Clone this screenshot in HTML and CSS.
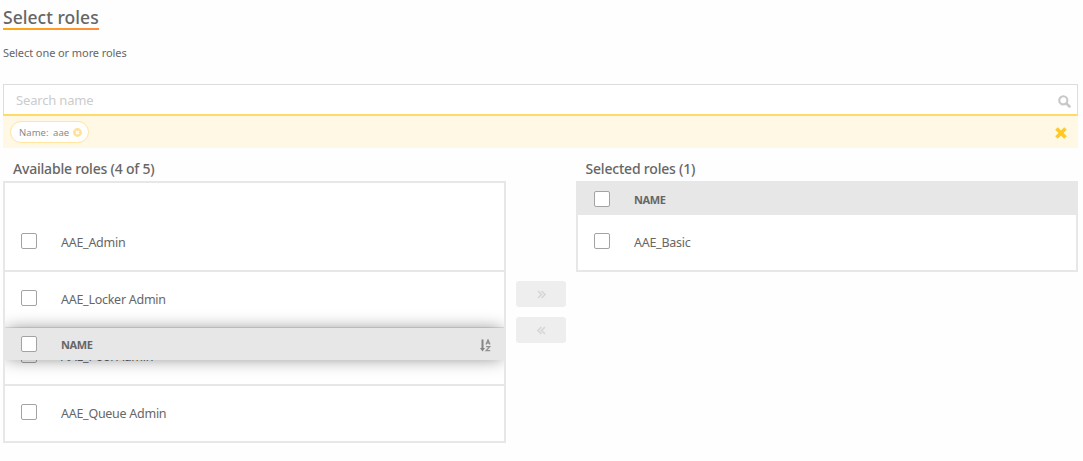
FILE: index.html
```html
<!DOCTYPE html>
<html lang="en">
<head>
<meta charset="utf-8">
<title>Select roles</title>
<link rel="stylesheet" href="styles.css">
</head>
<body>
<main class="page">
  <h1 class="title"><span class="title-text">Select roles</span></h1>
  <p class="subtitle">Select one or more roles</p>

  <div class="search">
    <span class="placeholder">Search name</span>
    <svg class="search-icon" viewBox="0 0 13 13"><circle cx="5.3" cy="5.3" r="4.1" fill="none" stroke="currentColor" stroke-width="2.1"/><path d="M8.5 8.5L11.5 11.5" stroke="currentColor" stroke-width="2.5" stroke-linecap="round"/></svg>
  </div>
  <div class="filters">
    <span class="chip"><span class="chip-text">Name: aae</span>
      <svg class="chip-icon" viewBox="0 0 9 9"><circle cx="4.5" cy="4.5" r="4.4" fill="currentColor"/><path d="M3 3L6 6M6 3L3 6" stroke="#fff" stroke-width="1.6"/></svg>
    </span>
    <svg class="clear-icon" viewBox="0 0 12 12"><path d="M2.8 2.8L9.2 9.2M9.2 2.8L2.8 9.2" stroke="currentColor" stroke-width="3.7" stroke-linecap="square"/></svg>
  </div>

  <div class="columns">
    <section class="column">
      <h2 class="heading">Available roles (4 of 5)</h2>
      <div class="table">
        <div class="header-space"></div>
        <div class="row"><span class="box"></span><span class="name">AAE_Admin</span></div>
        <div class="row"><span class="box"></span><span class="name">AAE_Locker Admin</span></div>
        <div class="row"><span class="box"></span><span class="name">AAE_Pool Admin</span></div>
        <div class="row row-last"><span class="box"></span><span class="name">AAE_Queue Admin</span></div>
        <div class="table-head floating">
          <span class="box"></span><span class="label">NAME</span>
          <svg class="sort-icon" viewBox="0 0 12 13"><path d="M2.5 0.5V10" stroke="#858585" stroke-width="2"/><path d="M0 9H5L2.5 12.5Z" fill="#858585"/><path d="M6 5.5L8 0.8L10 5.5M6.7 4H9.3M6 7.7H9.7L6.2 11.6H10.2" fill="none" stroke="#929292" stroke-width="1.3"/></svg>
        </div>
      </div>
    </section>

    <div class="transfer">
      <button class="move" aria-label="Add"><svg class="move-icon" viewBox="0 0 9 9"><path d="M1 1L4.5 4.5L1 8M4.6 1L8.1 4.5L4.6 8" fill="none" stroke="currentColor" stroke-width="1.6"/></svg></button>
      <button class="move" aria-label="Remove"><svg class="move-icon" viewBox="0 0 9 9"><path d="M8 1L4.5 4.5L8 8M4.4 1L.9 4.5L4.4 8" fill="none" stroke="currentColor" stroke-width="1.6"/></svg></button>
    </div>

    <section class="column">
      <h2 class="heading heading-selected">Selected roles (1)</h2>
      <div class="table">
        <div class="table-head"><span class="box"></span><span class="label">NAME</span></div>
        <div class="row row-last"><span class="box"></span><span class="name">AAE_Basic</span></div>
      </div>
    </section>
  </div>
</main>
</body>
</html>
```
FILE: styles.css
```css
* { box-sizing: border-box; }
body { margin: 0; background: #fefefe; color: #666; font-family: "Noto Sans", "Open Sans", sans-serif; }
.page { padding: 5px 5px 0 3px; }
.title { margin: 0; height: 25px; display: flex; font-size: 17.5px; font-weight: 500; }
.title-text { width: 96px; height: 25px; line-height: 24px; letter-spacing: .03px; white-space: nowrap; border-bottom: 2px solid; border-image: linear-gradient(90deg, #ffa90f, #ff8c3c) 1; }
.subtitle { margin: 15px 0 0; height: 16px; line-height: 16px; font-size: 11px; letter-spacing: -.08px; }
.search { margin-top: 23px; height: 32px; display: flex; align-items: center; justify-content: space-between; padding: 0 7px 0 12px; background: #fff; border: 1px solid #ddd; border-bottom: 2px solid #ffda66; }
.placeholder { padding-top: 1px; font-size: 13px; letter-spacing: -.17px; color: #ccc; }
.search-icon { width: 13px; height: 13px; color: #c8c8c8; margin: 4px -1px 0 0; }
.filters { height: 32px; display: flex; align-items: center; justify-content: space-between; padding: 0 11px 0 7px; background: #fff8e4; }
.chip { width: 79px; height: 22px; display: flex; align-items: center; justify-content: space-between; padding: 0 6px 0 8px; background: #fff; border: 1px solid #ffe5a0; border-radius: 11px; color: #8a8a8a; }
.chip-text { font-size: 9.5px; letter-spacing: .05px; word-spacing: 2px; white-space: nowrap; }
.chip-icon { width: 9px; height: 9px; color: #ffe09a; }
.clear-icon { width: 12px; height: 12px; color: #ffca28; margin-top: 2px; }
.columns { display: grid; grid-template-columns: 503px 50px 502px; column-gap: 10px; align-items: start; }
.heading { margin: 0; height: 33px; padding: 8px 0 0 10px; line-height: 25px; font-size: 14px; font-weight: 500; letter-spacing: -.2px; }
.heading-selected { padding-left: 9.5px; }
.table { position: relative; overflow: hidden; border: 2px solid #e7e7e7; background: #fff; }
.header-space { height: 32px; }
.row { height: 57px; display: flex; align-items: center; padding: 0 16px 3px; border-bottom: 2px solid #e7e7e7; }
.row-last { height: 55px; border-bottom: 0; }
.box { width: 16px; height: 16px; flex: none; background: #fff; border: 1px solid #a3a3a3; border-radius: 2px; }
.name { margin-left: 24px; font-size: 12.5px; line-height: 18px; padding-top: 3px; white-space: nowrap; letter-spacing: -.27px; }
.table-head { height: 32px; display: flex; align-items: center; padding: 0 13px 0 16px; background: #e7e7e7; }
.floating { position: absolute; left: 0; right: 0; top: 145px; box-shadow: 0 0 17px -2px rgba(0, 0, 0, .5); }
.label { margin-left: 24px; padding-top: 1px; font-size: 11px; line-height: 15px; font-weight: 700; letter-spacing: -.4px; }
.sort-icon { width: 12px; height: 13px; margin: 2px -1px 0 auto; }
.transfer { display: flex; flex-direction: column; gap: 10px; padding-top: 133px; }
.move { width: 50px; height: 26px; display: flex; align-items: center; justify-content: center; padding: 0; border: 0; border-radius: 3px; background: #eee; color: #d6d6d6; }
.move-icon { width: 9px; height: 9px; }
```
